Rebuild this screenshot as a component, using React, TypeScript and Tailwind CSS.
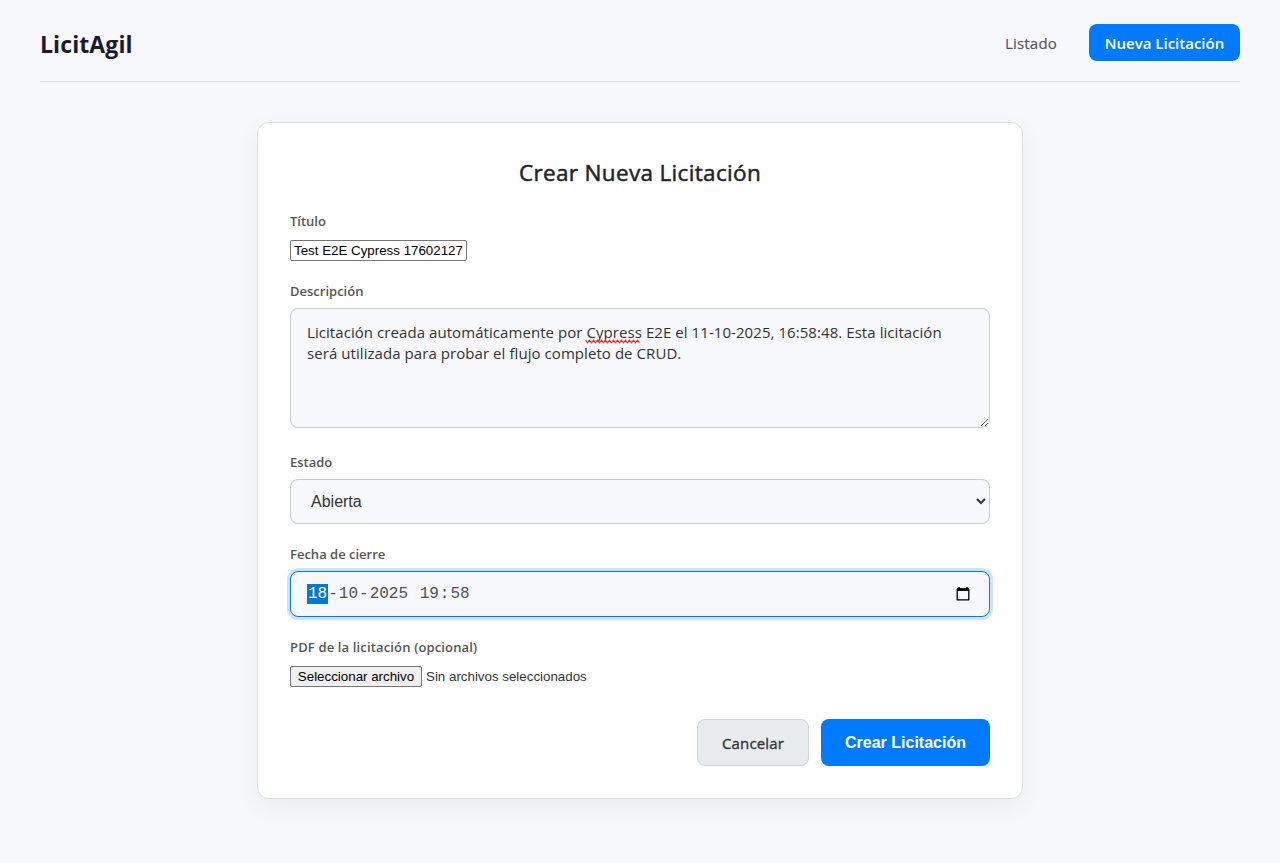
import type { ReactNode } from "react";

const UI = "font-['Open_Sans','Noto_Sans',sans-serif]";
const ARIAL = "font-['Liberation_Sans',Arial,sans-serif]";

function Label({ children, className = "" }: { children: ReactNode; className?: string }) {
  return (
    <label className={`block w-fit whitespace-nowrap text-[13px] leading-[19px] font-semibold text-[#555555] ${className}`}>
      {children}
    </label>
  );
}

function Header() {
  return (
    <header className="mx-10 flex h-[82px] items-start justify-between border-b border-[#dcdfe4] pt-6">
      <div className="mt-[3px] text-[23px] leading-[34px] font-bold tracking-[0.1px] text-[#1a1a2e]">LicitAgil</div>
      <nav className="flex items-center gap-8 text-[15px] leading-[21px]">
        <a className="mt-[2px] font-medium tracking-[0.2px] text-[#555555] [-webkit-text-stroke:0.15px_#555555]">Listado</a>
        <a className="flex h-[37px] w-[151px] items-center justify-center rounded-lg bg-[#007bff] pt-[2px] font-semibold whitespace-nowrap text-white">
          <span>Nueva Licitación</span>
        </a>
      </nav>
    </header>
  );
}

function Squiggle() {
  const points = Array.from({ length: 28 }, (_, i) => `${i * 2 + 0.5},${i % 2 === 0 ? 1.2 : 3.8}`).join(" ");
  return (
    <svg className="absolute top-[31px] left-[295px]" width="55" height="5" viewBox="0 0 55 5">
      <polyline points={points} fill="none" stroke="#f22" strokeWidth="1.1" />
    </svg>
  );
}

function CalendarIcon() {
  return (
    <svg width="14" height="16" viewBox="0 0 14 16" fill="none">
      <path d="M3 1V3M11 1V3" stroke="#000" strokeWidth="1.4" />
      <path d="M1.2 3.2h11.6v10.6H1.2z" stroke="#000" strokeWidth="1.3" strokeLinejoin="round" />
      <path d="M1 2.2h12V5H1z" fill="#000" />
    </svg>
  );
}

export default function App() {
  return (
    <div className={`min-h-[863px] bg-[#f7f8fc] ${UI}`}>
      <Header />
      <main className="mx-auto mt-10 h-[677px] w-[766px] rounded-xl border border-[#dee0e2] bg-white px-8 shadow-[0_8px_24px_rgba(0,0,0,0.06)]">
        <h1 className="pt-[32px] text-center text-[22.5px] leading-[36px] font-medium tracking-[0.34px] text-[#212529] [-webkit-text-stroke:0.5px_#212529]">
          Crear Nueva Licitación
        </h1>

        <div className="mt-[21px]">
          <Label>Título</Label>
          <input
            className={`mt-[9px] block h-[21px] w-[177px] rounded-[2px] border border-[#767676] bg-white px-[3px] text-[13.333px] text-black ${ARIAL}`}
            defaultValue="Test E2E Cypress 17602127"
          />
        </div>

        <div className="mt-[21px]">
          <Label>Descripción</Label>
          <div className="relative mt-[7px]">
            <textarea
              spellCheck={false}
              className="block h-[120px] w-full resize-y rounded-lg border border-[#cccccc] bg-[#f7f8fc] px-4 pt-[13px] text-[15px] leading-[21px] tracking-[0.065px] text-[#333333]"
              defaultValue={
                "Licitación creada automáticamente por Cypress E2E el 11-10-2025, 16:58:48. Esta licitación\nserá utilizada para probar el flujo completo de CRUD."
              }
            />
            <Squiggle />
          </div>
        </div>

        <div className="mt-[25px]">
          <Label>Estado</Label>
          <select
            className={`mt-[7px] block h-[45px] w-full rounded-lg border border-[#cccccc] bg-[#f7f8fc] px-4 text-[16px] text-[#333333] ${ARIAL}`}
            defaultValue="Abierta"
          >
            <option>Abierta</option>
          </select>
        </div>

        <div className="mt-[21px]">
          <Label>Fecha de cierre</Label>
          <div className="mt-[7px] flex h-[46px] items-center rounded-lg border border-[#007bff] bg-[#f7f8fc] pr-[19px] pl-4 font-['Liberation_Mono','Courier_New',monospace] text-[16px] text-[#505050] shadow-[0_0_0_3px_rgba(0,123,255,0.2)]">
            <span className="flex h-5 items-center bg-[#0078d7] px-px text-white">18</span>
            <span>-</span>
            <span className="px-px">10</span>
            <span>-</span>
            <span className="px-px">2025</span>
            <span className="whitespace-pre"> </span>
            <span className="px-px">19</span>
            <span>:</span>
            <span className="px-px">58</span>
            <span className="ml-auto">
              <CalendarIcon />
            </span>
          </div>
        </div>

        <div className="mt-[21px]">
          <Label className="tracking-[0.15px]">PDF de la licitación (opcional)</Label>
          <div className={`mt-[9px] flex h-[21px] items-center gap-[4px] text-[13.333px] ${ARIAL}`}>
            <button className="h-[21px] w-[132px] rounded-[2px] border border-[#767676] bg-[#efefef] whitespace-nowrap text-black">
              Seleccionar archivo
            </button>
            <span className="text-[#333333]">Sin archivos seleccionados</span>
          </div>
        </div>

        <div className="mt-[32px] flex justify-end gap-3">
          <button className="h-[47px] w-[112px] rounded-lg border border-[#ced4da] bg-[#e9ecef] pt-px text-[15px] font-medium tracking-[0.15px] text-[#333333] [-webkit-text-stroke:0.35px_#333333]">
            Cancelar
          </button>
          <button className={`h-[47px] w-[169px] rounded-lg bg-[#007bff] text-[16px] font-bold text-white ${ARIAL}`}>
            Crear Licitación
          </button>
        </div>
      </main>
    </div>
  );
}
